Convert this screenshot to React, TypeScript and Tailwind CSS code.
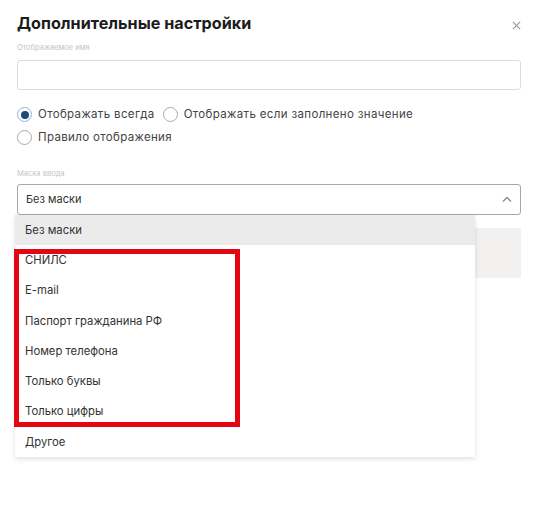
import React from "react";

const MASKS = [
  "Без маски",
  "СНИЛС",
  "E-mail",
  "Паспорт гражданина РФ",
  "Номер телефона",
  "Только буквы",
  "Только цифры",
  "Другое",
];

function Radio({ checked, label }: { checked?: boolean; label: string }) {
  return (
    <label className="flex items-center gap-[6px]">
      <span
        className={
          checked
            ? "w-[15px] h-[15px] rounded-full border-[1.5px] border-[#8fb3d6] flex items-center justify-center bg-white"
            : "w-[15px] h-[15px] rounded-full border-[1.5px] border-[#a9a9a9] bg-white"
        }
      >
        {checked && <span className="w-[8px] h-[8px] rounded-full bg-[#1f4a78]" />}
      </span>
      <span className="text-[11.5px] tracking-[0.35px] text-[#444]">{label}</span>
    </label>
  );
}

export default function App() {
  return (
    <div
      className="relative w-[537px] h-[505px] bg-white overflow-hidden"
      style={{ fontFamily: "Inter, 'Noto Sans', sans-serif" }}
    >
      <div className="px-[17px] pr-[16px] pt-[11px]">
        {/* Header */}
        <div className="flex items-center justify-between h-[24px]">
          <h2 className="text-[16.2px] font-bold text-[#1c1c1c]">
            Дополнительные настройки
          </h2>
          <svg width="9" height="9" viewBox="0 0 10 10" className="mt-[5px]">
            <path d="M1 1L9 9M9 1L1 9" stroke="#9a9a9a" strokeWidth="1.3" />
          </svg>
        </div>

        {/* Display name */}
        <p className="mt-[8px] text-[7.5px] leading-[10px] text-[#c4c4c4]">Отображаемое имя</p>
        <div className="mt-[7px] h-[30px] rounded-[3px] border border-[#dcdcdc] bg-white" />

        {/* Radios */}
        <div className="mt-[16px] flex flex-col gap-[6px]">
          <div className="flex items-center gap-[8px]">
            <Radio checked label="Отображать всегда" />
            <Radio label="Отображать если заполнено значение" />
          </div>
          <Radio label="Правило отображения" />
        </div>

        {/* Input mask */}
        <p className="mt-[22px] text-[7.5px] leading-[10px] text-[#c4c4c4]">Маска ввода</p>
        <div className="mt-[5px] h-[31px] rounded-[3px] border border-[#a8a8a8] bg-white flex items-center justify-between pl-[8px] pr-[8px]">
          <span className="text-[11px] text-[#333]">Без маски</span>
          <svg width="10" height="7" viewBox="0 0 10 7">
            <path d="M1 5.5L5 1.5L9 5.5" fill="none" stroke="#8a8a8a" strokeWidth="1.3" />
          </svg>
        </div>

        {/* Panel behind dropdown */}
        <div className="mt-[13px] h-[50px] rounded-[2px] bg-[#f3f1f0]" />
      </div>

      {/* Dropdown */}
      <div className="absolute left-[15px] top-[215px] w-[460px] bg-white shadow-[0_2px_5px_rgba(0,0,0,0.12)]">
        {MASKS.map((m, i) => (
          <div
            key={m}
            className={
              i === 0
                ? "h-[30.3px] flex items-center pl-[10px] bg-[#ebebeb] text-[11.3px] text-[#333]"
                : "h-[30.3px] flex items-center pl-[10px] text-[11.3px] text-[#333]"
            }
          >
            {m}
          </div>
        ))}
      </div>

      {/* Highlight annotation */}
      <div className="absolute left-[14px] top-[249px] w-[226px] h-[178px] border-[5px] border-[#e30613]" />
    </div>
  );
}
